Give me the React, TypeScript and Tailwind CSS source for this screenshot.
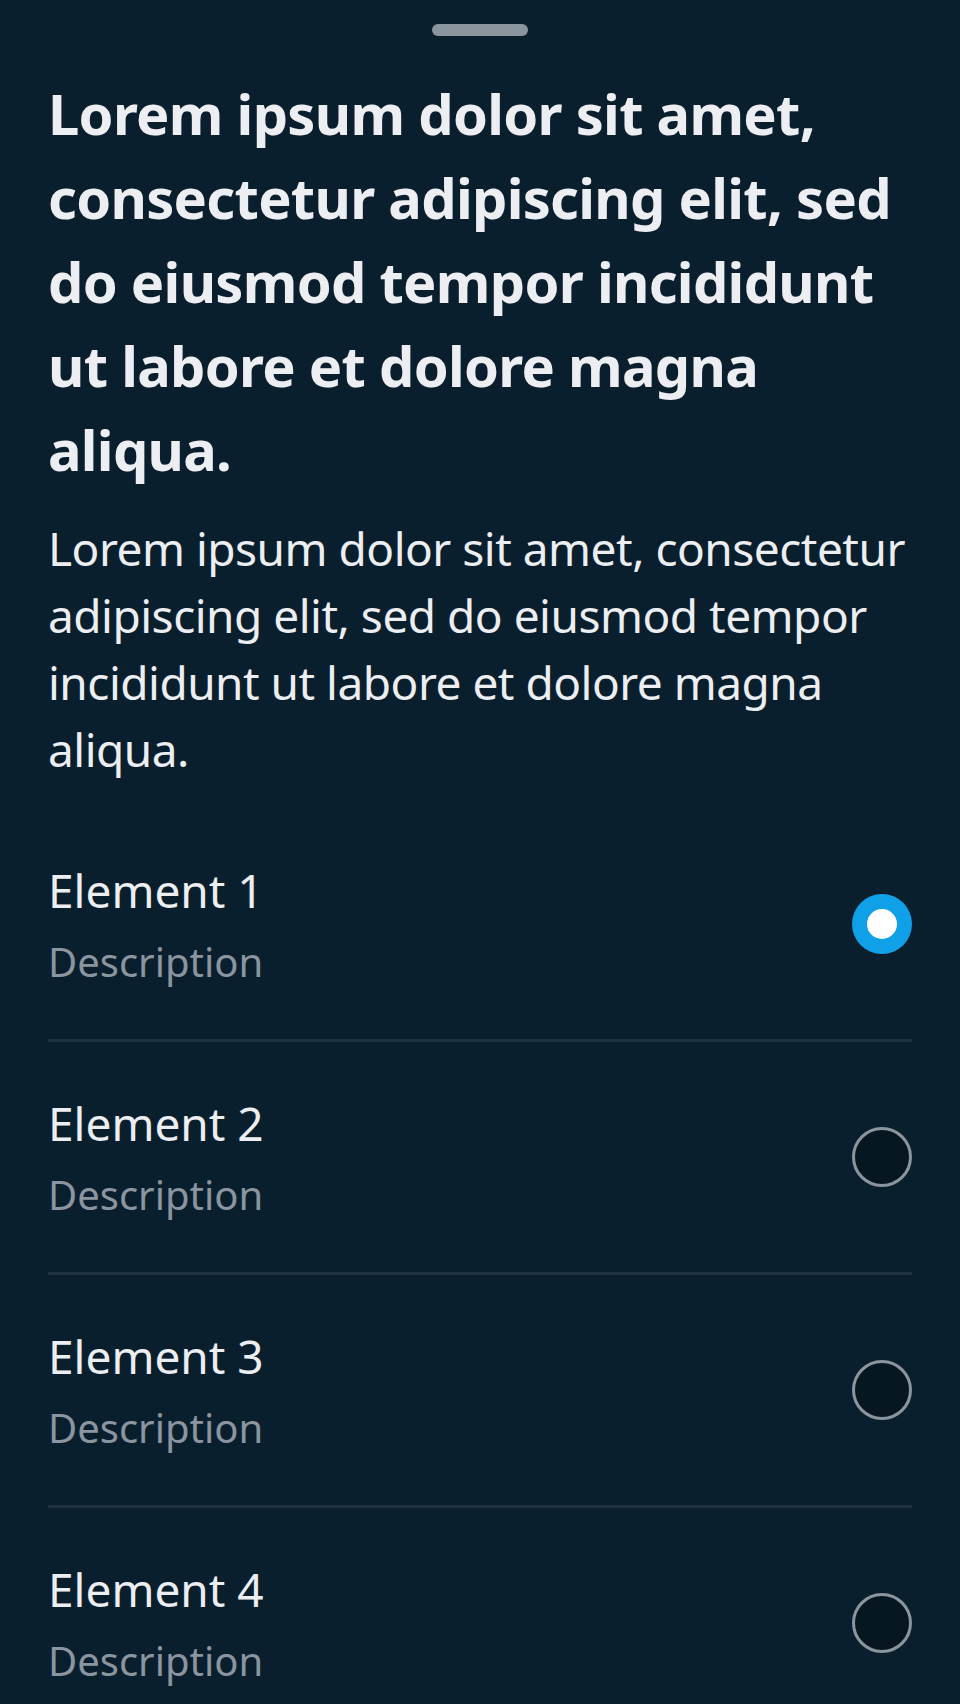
import { useState } from "react";

const items = [
  { id: 1, title: "Element 1", desc: "Description" },
  { id: 2, title: "Element 2", desc: "Description" },
  { id: 3, title: "Element 3", desc: "Description" },
  { id: 4, title: "Element 4", desc: "Description" },
];

function Radio({ checked }: { checked: boolean }) {
  if (checked) {
    return (
      <span className="flex h-[60px] w-[60px] shrink-0 items-center justify-center rounded-full bg-[#10a0e8]">
        <span className="h-[30px] w-[30px] rounded-full bg-white" />
      </span>
    );
  }
  return (
    <span className="h-[60px] w-[60px] shrink-0 rounded-full border-[3px] border-[#8a959e] bg-[#071722]" />
  );
}

export default function App() {
  const [selected, setSelected] = useState(1);

  return (
    <div
      className="min-h-[1704px] bg-[#0a1f2d] px-12 text-[#eceef2]"
      style={{ fontFamily: '"Noto Sans", sans-serif' }}
    >
      <div className="flex justify-center pt-6">
        <div className="h-3 w-24 rounded-full bg-[#8a959e]" />
      </div>

      <h1 className="mt-[35px] text-[56px] font-bold leading-[84px] tracking-[-0.7px]">
        Lorem ipsum dolor sit amet, consectetur adipiscing elit, sed do
        eiusmod tempor incididunt ut labore et dolore magna aliqua.
      </h1>
      <p className="mt-6 text-[46px] leading-[67px] tracking-[-0.5px]">
        Lorem ipsum dolor sit amet, consectetur adipiscing elit, sed do eiusmod
        tempor incididunt ut labore et dolore magna aliqua.
      </p>

      <ul className="mt-[26px]">
        {items.map((item, i) => (
          <li
            key={item.id}
            onClick={() => setSelected(item.id)}
            className={
              "flex cursor-pointer items-center justify-between py-12" +
              (i < items.length - 1 ? " border-b-[3px] border-[#1c303d]" : "")
            }
          >
            <div className="flex flex-col">
              <span className="text-[46px] leading-[66px]">{item.title}</span>
              <span className="mt-[9px] text-[40px] leading-[59px] text-[#8b959f]">
                {item.desc}
              </span>
            </div>
            <Radio checked={selected === item.id} />
          </li>
        ))}
      </ul>
    </div>
  );
}
